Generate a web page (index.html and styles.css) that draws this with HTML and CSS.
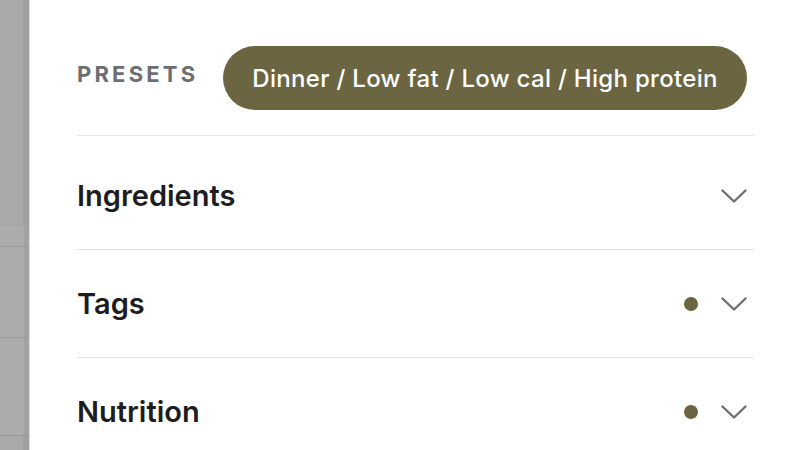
FILE: index.html
```html
<!DOCTYPE html>
<html lang="en">
<head>
    <meta charset="UTF-8">
    <meta name="viewport" content="width=device-width, initial-scale=1.0">
    <title>Filters</title>
    <link rel="stylesheet" href="styles.css">
</head>
<body>
    <div class="backdrop">
        <div class="backdrop-top"></div>
        <div class="backdrop-row short"></div>
        <div class="backdrop-row"></div>
        <div class="backdrop-row tall"></div>
    </div>
    <div class="panel">
        <div class="presets">
            <span class="presets-label">PRESETS</span>
            <button class="preset-pill">Dinner / Low fat / Low cal / High protein</button>
        </div>
        <div class="section first">
            <span class="section-title">Ingredients</span>
            <div class="section-meta">
                <svg class="chevron" viewBox="0 0 26 14"><path d="M1.5 1.5 L13 12.5 L24.5 1.5"/></svg>
            </div>
        </div>
        <div class="section">
            <span class="section-title">Tags</span>
            <div class="section-meta">
                <span class="dot"></span>
                <svg class="chevron" viewBox="0 0 26 14"><path d="M1.5 1.5 L13 12.5 L24.5 1.5"/></svg>
            </div>
        </div>
        <div class="section">
            <span class="section-title">Nutrition</span>
            <div class="section-meta">
                <span class="dot"></span>
                <svg class="chevron" viewBox="0 0 26 14"><path d="M1.5 1.5 L13 12.5 L24.5 1.5"/></svg>
            </div>
        </div>
    </div>
</body>
</html>
```

FILE: styles.css
```css
body {
    display: flex;
    height: 100vh;
    margin: 0;
    overflow: hidden;
    font-family: Inter, "Noto Sans", sans-serif;
    background: #ffffff;
}

.backdrop {
    width: 29px;
    flex-shrink: 0;
    display: flex;
    flex-direction: column;
    background: linear-gradient(to right, #a9a9a8 0, #a9a9a8 23px, #9f9f9e 23px);
}

.backdrop-top {
    height: 226px;
    flex-shrink: 0;
}

.backdrop-row {
    height: 90px;
    flex-shrink: 0;
    border-bottom: 1px solid #979796;
    background: linear-gradient(to right, #acacab 0, #acacab 24px, #a3a3a2 24px);
}

.backdrop-row.short {
    height: 20px;
}

.backdrop-row.tall {
    height: 97px;
}

.panel {
    flex: 1;
    background: #ffffff;
    border-left: 1px solid #dcdde0;
    padding: 0 46px 0 47px;
}

.presets {
    display: flex;
    align-items: center;
    gap: 25px;
    padding: 46px 0 25px;
    border-bottom: 1px solid #e3e4e7;
}

.presets-label {
    margin-bottom: 9px;
    font-size: 22px;
    font-weight: 700;
    letter-spacing: 3.2px;
    color: #6b6e73;
}

.preset-pill {
    height: 64px;
    padding: 0 29px;
    border: none;
    border-radius: 32px;
    background: #6b6641;
    color: #ffffff;
    font-family: inherit;
    font-size: 24px;
    font-weight: 500;
    letter-spacing: 0.3px;
    cursor: pointer;
}

.section {
    display: flex;
    align-items: center;
    justify-content: space-between;
    height: 107px;
    border-bottom: 1px solid #e3e4e7;
}

.section.first {
    height: 114px;
    padding-top: 6px;
    box-sizing: border-box;
}

.section-title {
    font-size: 29px;
    font-weight: 600;
    color: #1d1d1f;
}

.section-meta {
    display: flex;
    align-items: center;
    gap: 23px;
    padding-right: 7px;
}

.dot {
    width: 14px;
    height: 14px;
    border-radius: 50%;
    background: #6b6641;
}

.chevron {
    width: 26px;
    height: 14px;
    fill: none;
    stroke: #6b6e73;
    stroke-width: 2.4;
    stroke-linecap: round;
    stroke-linejoin: round;
}
```
